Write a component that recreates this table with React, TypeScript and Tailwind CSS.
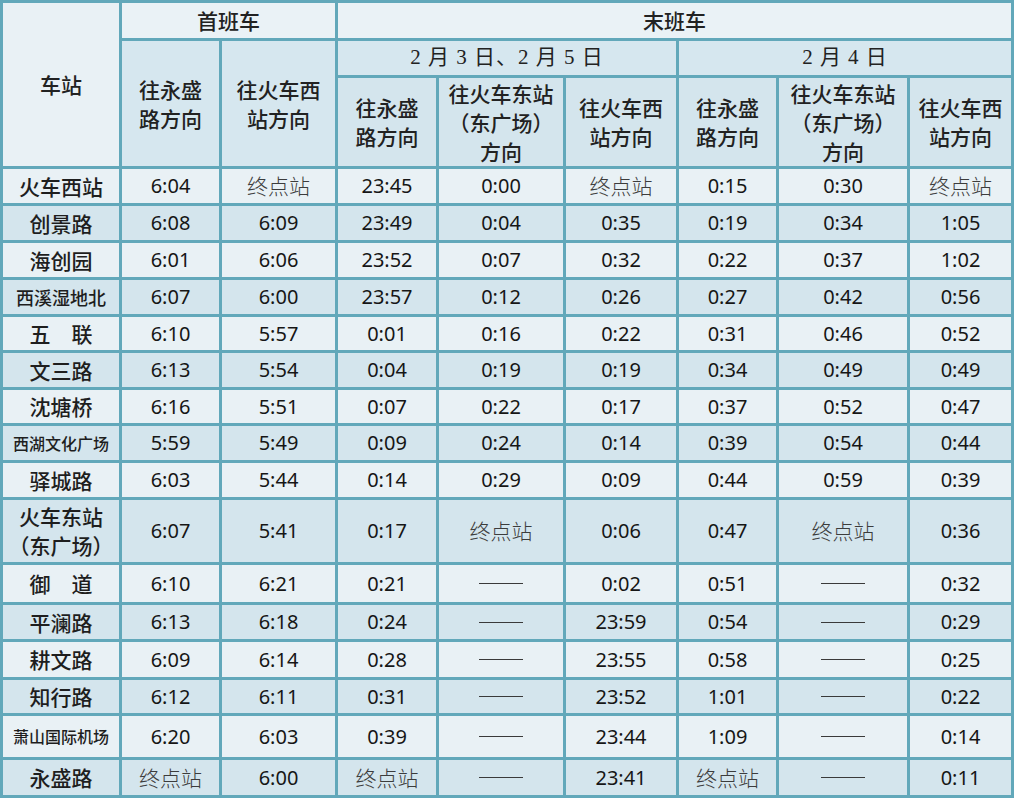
const TERM = "终点站";
const DASH = "——";

type Row = { name: string; size?: string; h: string; cells: string[] };

const rows: Row[] = [
  { name: "火车西站", h: "h-[37px]", cells: ["6:04", TERM, "23:45", "0:00", TERM, "0:15", "0:30", TERM] },
  { name: "创景路", h: "h-[37px]", cells: ["6:08", "6:09", "23:49", "0:04", "0:35", "0:19", "0:34", "1:05"] },
  { name: "海创园", h: "h-[37px]", cells: ["6:01", "6:06", "23:52", "0:07", "0:32", "0:22", "0:37", "1:02"] },
  { name: "西溪湿地北", size: "text-[18px]", h: "h-[37px]", cells: ["6:07", "6:00", "23:57", "0:12", "0:26", "0:27", "0:42", "0:56"] },
  { name: "五　联", h: "h-[36px]", cells: ["6:10", "5:57", "0:01", "0:16", "0:22", "0:31", "0:46", "0:52"] },
  { name: "文三路", h: "h-[37px]", cells: ["6:13", "5:54", "0:04", "0:19", "0:19", "0:34", "0:49", "0:49"] },
  { name: "沈塘桥", h: "h-[36px]", cells: ["6:16", "5:51", "0:07", "0:22", "0:17", "0:37", "0:52", "0:47"] },
  { name: "西湖文化广场", size: "text-[16px]", h: "h-[37px]", cells: ["5:59", "5:49", "0:09", "0:24", "0:14", "0:39", "0:54", "0:44"] },
  { name: "驿城路", h: "h-[37px]", cells: ["6:03", "5:44", "0:14", "0:29", "0:09", "0:44", "0:59", "0:39"] },
  { name: "火车东站\n（东广场）", h: "h-[65px]", cells: ["6:07", "5:41", "0:17", TERM, "0:06", "0:47", TERM, "0:36"] },
  { name: "御　道", h: "h-[40px]", cells: ["6:10", "6:21", "0:21", DASH, "0:02", "0:51", DASH, "0:32"] },
  { name: "平澜路", h: "h-[37px]", cells: ["6:13", "6:18", "0:24", DASH, "23:59", "0:54", DASH, "0:29"] },
  { name: "耕文路", h: "h-[38px]", cells: ["6:09", "6:14", "0:28", DASH, "23:55", "0:58", DASH, "0:25"] },
  { name: "知行路", h: "h-[36px]", cells: ["6:12", "6:11", "0:31", DASH, "23:52", "1:01", DASH, "0:22"] },
  { name: "萧山国际机场", size: "text-[16px]", h: "h-[44px]", cells: ["6:20", "6:03", "0:39", DASH, "23:44", "1:09", DASH, "0:14"] },
  { name: "永盛路", h: "h-[38px]", cells: [TERM, "6:00", TERM, DASH, "23:41", TERM, DASH, "0:11"] },
];

const cjk = "font-['Noto_Sans_CJK_SC',sans-serif]";
const td = "border-[3px] border-[#62a8ba] p-0 text-center align-middle";

function Cell({ v }: { v: string }) {
  if (v === TERM) {
    return <span className={`${cjk} text-[21px] font-light text-[#3c3c3c]`}>{v}</span>;
  }
  if (v === DASH) {
    return <div className="mx-auto w-[44px] border-t border-[#3a3a3a]" />;
  }
  return <span className="font-['Noto_Sans',sans-serif] text-[20px] text-[#161616]">{v}</span>;
}

function Head({ text }: { text: string }) {
  return (
    <div className={`${cjk} text-[21px] font-medium leading-[29px] text-[#222] whitespace-pre-line`}>
      {text}
    </div>
  );
}

export default function App() {
  const widths = [119, 100, 116, 101, 127, 113, 100, 131, 104];
  return (
    <div className="w-[1015px] h-[803px] bg-white overflow-hidden">
      <table className="table-fixed border-collapse w-[1013px]">
        <colgroup>
          {widths.map((w, i) => (
            <col key={i} style={{ width: w }} />
          ))}
        </colgroup>
        <thead>
          <tr className="h-[38px] bg-[#eaf2f6]">
            <th rowSpan={3} className={`${td} bg-[#e9f1f5]`}>
              <Head text="车站" />
            </th>
            <th colSpan={2} className={td}>
              <Head text="首班车" />
            </th>
            <th colSpan={6} className={td}>
              <Head text="末班车" />
            </th>
          </tr>
          <tr className="h-[37px] bg-[#d6e7ef]">
            <th rowSpan={2} className={td}>
              <Head text={"往永盛\n路方向"} />
            </th>
            <th rowSpan={2} className={td}>
              <Head text={"往火车西\n站方向"} />
            </th>
            <th colSpan={3} className={td}>
              <div className="font-['Liberation_Serif','Noto_Sans_CJK_SC',serif] text-[21px] font-normal text-[#222] tracking-[1px]">
                2 月 3 日、2 月 5 日
              </div>
            </th>
            <th colSpan={3} className={td}>
              <div className="font-['Liberation_Serif','Noto_Sans_CJK_SC',serif] text-[21px] font-normal text-[#222] tracking-[1px]">
                2 月 4 日
              </div>
            </th>
          </tr>
          <tr className="h-[91px] bg-[#d4e5ed]">
            <th className={td}>
              <Head text={"往永盛\n路方向"} />
            </th>
            <th className={td}>
              <Head text={"往火车东站\n（东广场）\n方向"} />
            </th>
            <th className={td}>
              <Head text={"往火车西\n站方向"} />
            </th>
            <th className={td}>
              <Head text={"往永盛\n路方向"} />
            </th>
            <th className={td}>
              <Head text={"往火车东站\n（东广场）\n方向"} />
            </th>
            <th className={td}>
              <Head text={"往火车西\n站方向"} />
            </th>
          </tr>
        </thead>
        <tbody>
          {rows.map((r, i) => (
            <tr key={r.name} className={`${r.h} ${i % 2 === 0 ? "bg-[#e9f1f5]" : "bg-[#d4e5ed]"}`}>
              <td className={td}>
                <div
                  className={`${cjk} font-medium text-[#1e1e1e] whitespace-pre-line leading-[29px] ${
                    r.size ?? "text-[21px]"
                  }`}
                >
                  {r.name}
                </div>
              </td>
              {r.cells.map((c, j) => (
                <td key={j} className={td}>
                  <Cell v={c} />
                </td>
              ))}
            </tr>
          ))}
        </tbody>
      </table>
    </div>
  );
}
